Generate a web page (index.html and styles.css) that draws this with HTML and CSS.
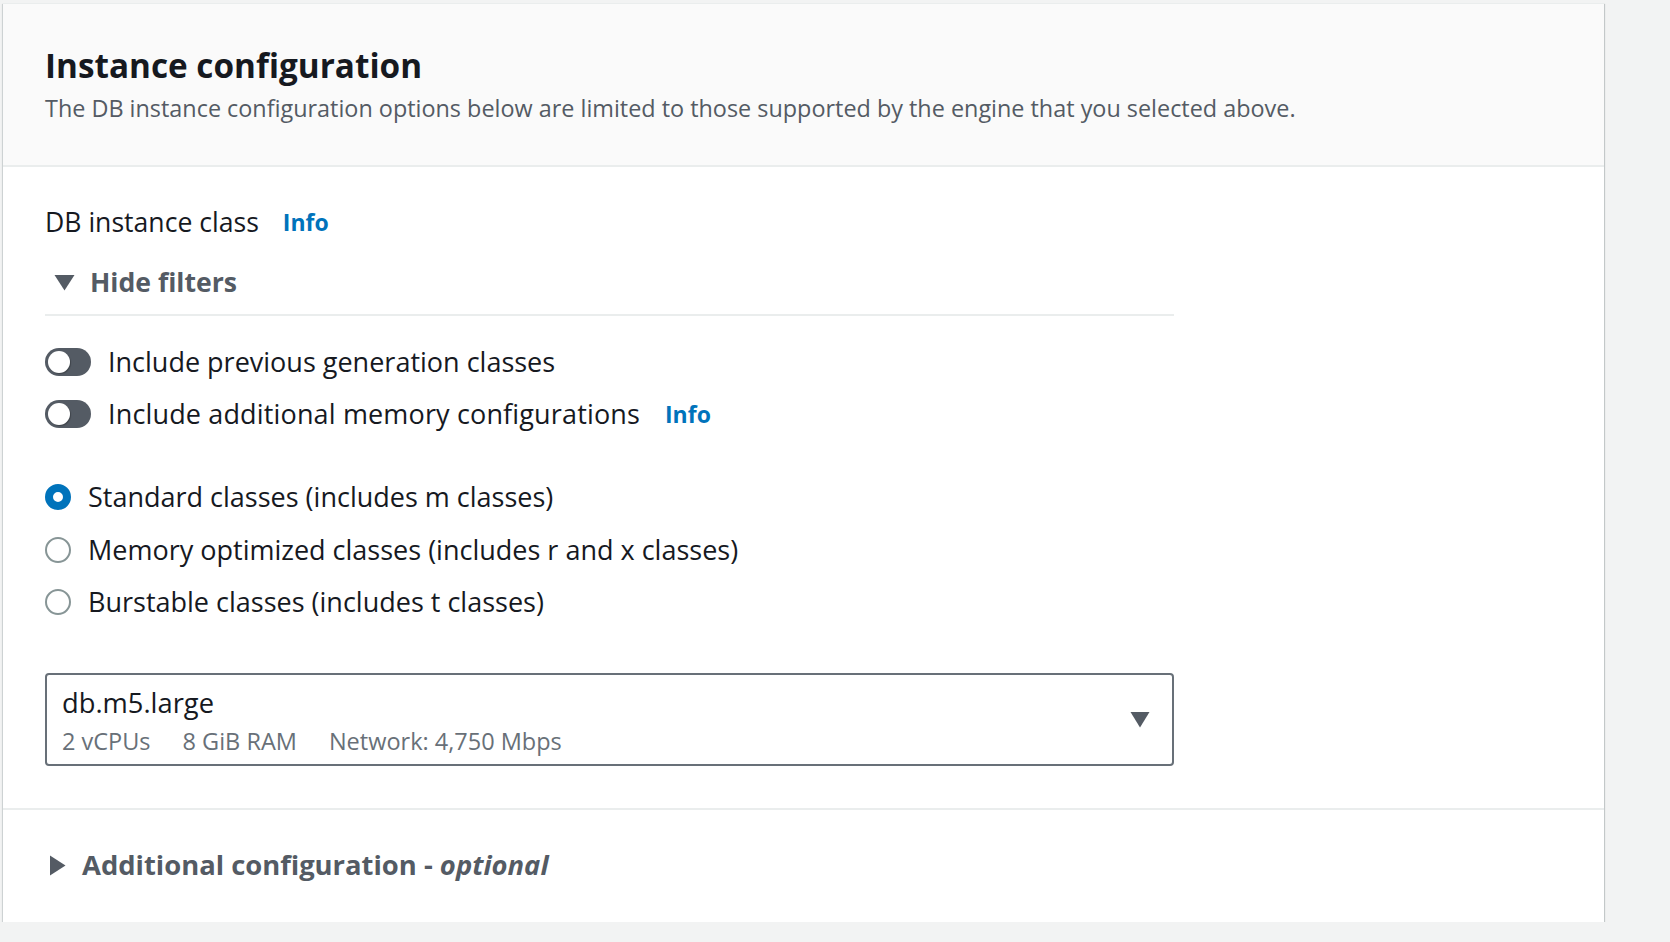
FILE: index.html
```html
<!DOCTYPE html>
<html lang="en">
<head>
<meta charset="utf-8">
<title>Instance configuration</title>
<link rel="stylesheet" href="styles.css">
</head>
<body>
<div class="page">
  <section class="card">
    <header class="card-header">
      <h2 class="title">Instance configuration</h2>
      <p class="description">The DB instance configuration options below are limited to those supported by the engine that you selected above.</p>
    </header>
    <div class="card-body">
      <div class="field-label">
        <span>DB instance class</span>
        <a class="info" href="#">Info</a>
      </div>
      <div class="expander">
        <svg class="caret-down" width="21" height="17" viewBox="0 0 21 17"><path d="M0.5 1 H20.5 L10.5 16.5 Z" fill="#545b64"/></svg>
        <span>Hide filters</span>
      </div>
      <div class="divider"></div>
      <div class="toggles">
        <label class="toggle-row">
          <span class="toggle"><span class="knob"></span></span>
          <span>Include previous generation classes</span>
        </label>
        <label class="toggle-row">
          <span class="toggle"><span class="knob"></span></span>
          <span class="wide">Include additional memory configurations</span>
          <a class="info" href="#">Info</a>
        </label>
      </div>
      <div class="radios">
        <label class="radio-row">
          <span class="radio checked"></span>
          <span>Standard classes (includes m classes)</span>
        </label>
        <label class="radio-row">
          <span class="radio"></span>
          <span>Memory optimized classes (includes r and x classes)</span>
        </label>
        <label class="radio-row">
          <span class="radio"></span>
          <span>Burstable classes (includes t classes)</span>
        </label>
      </div>
      <div class="select">
        <div class="select-text">
          <div class="select-value">db.m5.large</div>
          <div class="select-tags">
            <span>2 vCPUs</span>
            <span>8 GiB RAM</span>
            <span>Network: 4,750 Mbps</span>
          </div>
        </div>
        <svg class="select-caret" width="20" height="17" viewBox="0 0 20 17"><path d="M0.5 1 H19.5 L10 16.5 Z" fill="#545b64"/></svg>
      </div>
    </div>
    <div class="card-footer">
      <svg class="caret-right" width="17" height="21" viewBox="0 0 17 21"><path d="M1 0.5 V20.5 L16.5 10.5 Z" fill="#545b64"/></svg>
      <span>Additional configuration - <em>optional</em></span>
    </div>
  </section>
</div>
</body>
</html>
```

FILE: styles.css
```css
* { box-sizing: border-box; }

html, body {
  margin: 0;
  padding: 0;
  background: #f2f3f3;
  font-family: "Open Sans", "Noto Sans", sans-serif;
  color: #16191f;
}

.page {
  padding: 3px 0 0 3px;
}

.card {
  width: 1601px;
  background: #ffffff;
  border-top: 1px solid #eaeded;
  box-shadow: 0 1px 1px 0 rgba(0, 28, 36, 0.3), 1px 1px 1px 0 rgba(0, 28, 36, 0.15), -1px 1px 1px 0 rgba(0, 28, 36, 0.1);
}

.card-header {
  background: #fafafa;
  padding: 41px 40px 41px 42px;
  border-bottom: 2px solid #eaeded;
}

.title {
  margin: 0;
  font-size: 33.3px;
  line-height: 40px;
  font-weight: 700;
  color: #16191f;
}

.description {
  margin: 7px 0 0;
  font-size: 23.4px;
  line-height: 32px;
  color: #545b64;
}

.card-body {
  padding: 37px 40px 42px 42px;
  font-size: 27px;
  line-height: 36px;
}

.field-label {
  display: flex;
  align-items: center;
  gap: 24px;
  font-size: 26.6px;
}

.info {
  color: #0073bb;
  font-weight: 700;
  font-size: 23px;
  text-decoration: none;
}

.expander {
  margin-top: 24px;
  display: flex;
  align-items: center;
  gap: 15px;
  padding-left: 9px;
  font-weight: 700;
  font-size: 26.6px;
  color: #545b64;
}

.divider {
  width: 1129px;
  height: 2px;
  margin-top: 14px;
  background: #eaeded;
}

.toggles {
  margin-top: 28px;
  display: flex;
  flex-direction: column;
  gap: 16px;
}

.toggle-row {
  display: flex;
  align-items: center;
  height: 36px;
}

.toggle-row .wide {
  letter-spacing: 0.15px;
}

.toggle-row .info {
  margin-left: 25px;
}

.toggle {
  position: relative;
  width: 46px;
  height: 28px;
  border-radius: 14px;
  background: #545b64;
  margin-right: 17px;
  flex: none;
}

.knob {
  position: absolute;
  left: 3px;
  top: 3px;
  width: 22px;
  height: 22px;
  border-radius: 50%;
  background: #ffffff;
  box-shadow: 1px 1px 1px rgba(0, 0, 0, 0.25);
}

.radios {
  margin-top: 47px;
  display: flex;
  flex-direction: column;
  gap: 16.5px;
}

.radio-row {
  display: flex;
  align-items: center;
  height: 36px;
}

.radio {
  width: 26px;
  height: 26px;
  border-radius: 50%;
  border: 2px solid #879596;
  background: #ffffff;
  margin-right: 17px;
  flex: none;
}

.radio.checked {
  border: 8px solid #0073bb;
  background: #ffffff;
}

.select {
  margin-top: 53px;
  width: 1129px;
  height: 93px;
  border: 2px solid #687078;
  border-radius: 4px;
  padding: 11px 22px 8px 15px;
  display: flex;
  align-items: center;
  justify-content: space-between;
}

.select-value {
  font-size: 27.3px;
  line-height: 34px;
  color: #16191f;
}

.select-tags {
  margin-top: 6px;
  font-size: 23.5px;
  line-height: 30px;
  color: #687078;
  display: flex;
  gap: 32px;
}

.select-caret {
  margin-top: -3px;
  flex: none;
}

.card-footer {
  border-top: 2px solid #eaeded;
  padding: 37px 40px 39px 46px;
  display: flex;
  align-items: center;
  gap: 16px;
  font-size: 27.4px;
  line-height: 36px;
  font-weight: 700;
  color: #545b64;
}

.card-footer em {
  font-style: italic;
  font-weight: 700;
}

.caret-right, .caret-down {
  flex: none;
}
```
